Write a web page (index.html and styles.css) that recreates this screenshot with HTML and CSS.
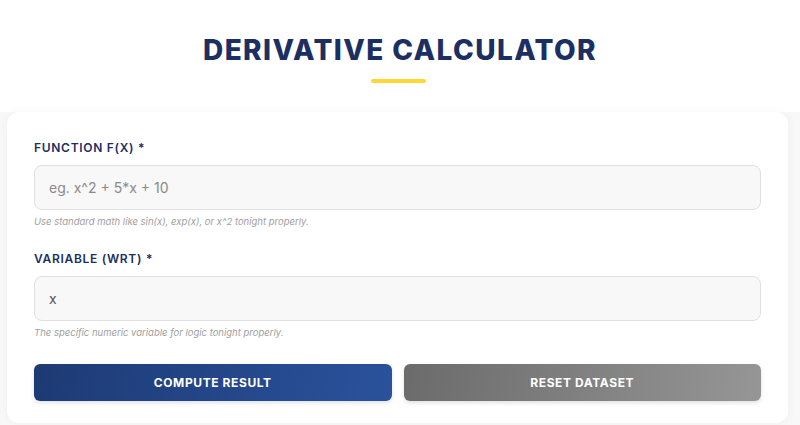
FILE: index.html
```html
<!DOCTYPE html>
<html lang="en">
<head>
<meta charset="utf-8">
<title>Derivative Calculator</title>
<link rel="stylesheet" href="styles.css">
</head>
<body>
<header class="head">
  <h1 class="title">DERIVATIVE CALCULATOR</h1>
  <div class="bar"></div>
</header>
<main class="card">
  <div class="field">
    <label class="label" for="fx">FUNCTION F(X) *</label>
    <input class="input" id="fx" type="text" placeholder="eg. x^2 + 5*x + 10">
    <p class="hint">Use standard math like sin(x), exp(x), or x^2 tonight properly.</p>
  </div>
  <div class="field">
    <label class="label" for="wrt">VARIABLE (WRT) *</label>
    <input class="input" id="wrt" type="text" value="x">
    <p class="hint">The specific numeric variable for logic tonight properly.</p>
  </div>
  <div class="actions">
    <button class="btn btn-primary" type="button">COMPUTE RESULT</button>
    <button class="btn btn-secondary" type="button">RESET DATASET</button>
  </div>
</main>
</body>
</html>
```
FILE: styles.css
```css
* { box-sizing: border-box; }
html, body { margin: 0; padding: 0; }
body {
  background: #f8f8f8;
  font-family: "Inter", "Open Sans", "Liberation Sans", sans-serif;
  color: #1b2f63;
  height: 425px;
  overflow: hidden;
}
.head {
  background: #fff;
  display: flex;
  flex-direction: column;
  align-items: center;
  padding-top: 33px;
  height: 112px;
}
.title {
  margin: 0;
  font-size: 28px;
  line-height: 34px;
  font-weight: 800;
  letter-spacing: 1.4px;
  color: #1b2f63;
}
.bar {
  width: 55px;
  height: 4px;
  border-radius: 2px;
  background: #fdd835;
  margin-top: 12px;
  margin-left: -3px;
}
.card {
  margin: 0 12px 0 7px;
  background: #fff;
  border-radius: 12px;
  box-shadow: 0 0 10px rgba(0,0,0,0.04);
  padding: 28px 27px 24px 27px;
  height: 311px;
}
.field { display: flex; flex-direction: column; }
.field + .field { margin-top: 23px; }
.label {
  font-size: 12px;
  line-height: 16px;
  font-weight: 600;
  letter-spacing: 0.7px;
  color: #1b2f63;
}
.input {
  margin-top: 9px;
  height: 45px;
  border: 1px solid #e0e0e0;
  border-radius: 8px;
  background: #f8f8f8;
  padding: 0 14px;
  font-family: inherit;
  font-size: 14px;
  color: #555;
  outline: none;
}
.input::placeholder { color: #8a8a8a; }
.hint {
  margin: 6px 0 0;
  font-size: 9.5px;
  line-height: 12px;
  font-style: italic;
  color: #9e9e9e;
}
.actions {
  display: flex;
  gap: 12px;
  margin-top: 25px;
}
.btn {
  flex: 1;
  height: 37px;
  border: none;
  border-radius: 6px;
  color: #fff;
  font-family: inherit;
  font-size: 12px;
  font-weight: 700;
  letter-spacing: 0.6px;
  box-shadow: 0 2px 4px rgba(0,0,0,0.12);
}
.btn-primary { background: linear-gradient(100deg, #1d3a74 0%, #2a529c 100%); }
.btn-secondary { background: linear-gradient(100deg, #6b6b6b 0%, #969696 100%); }
```
